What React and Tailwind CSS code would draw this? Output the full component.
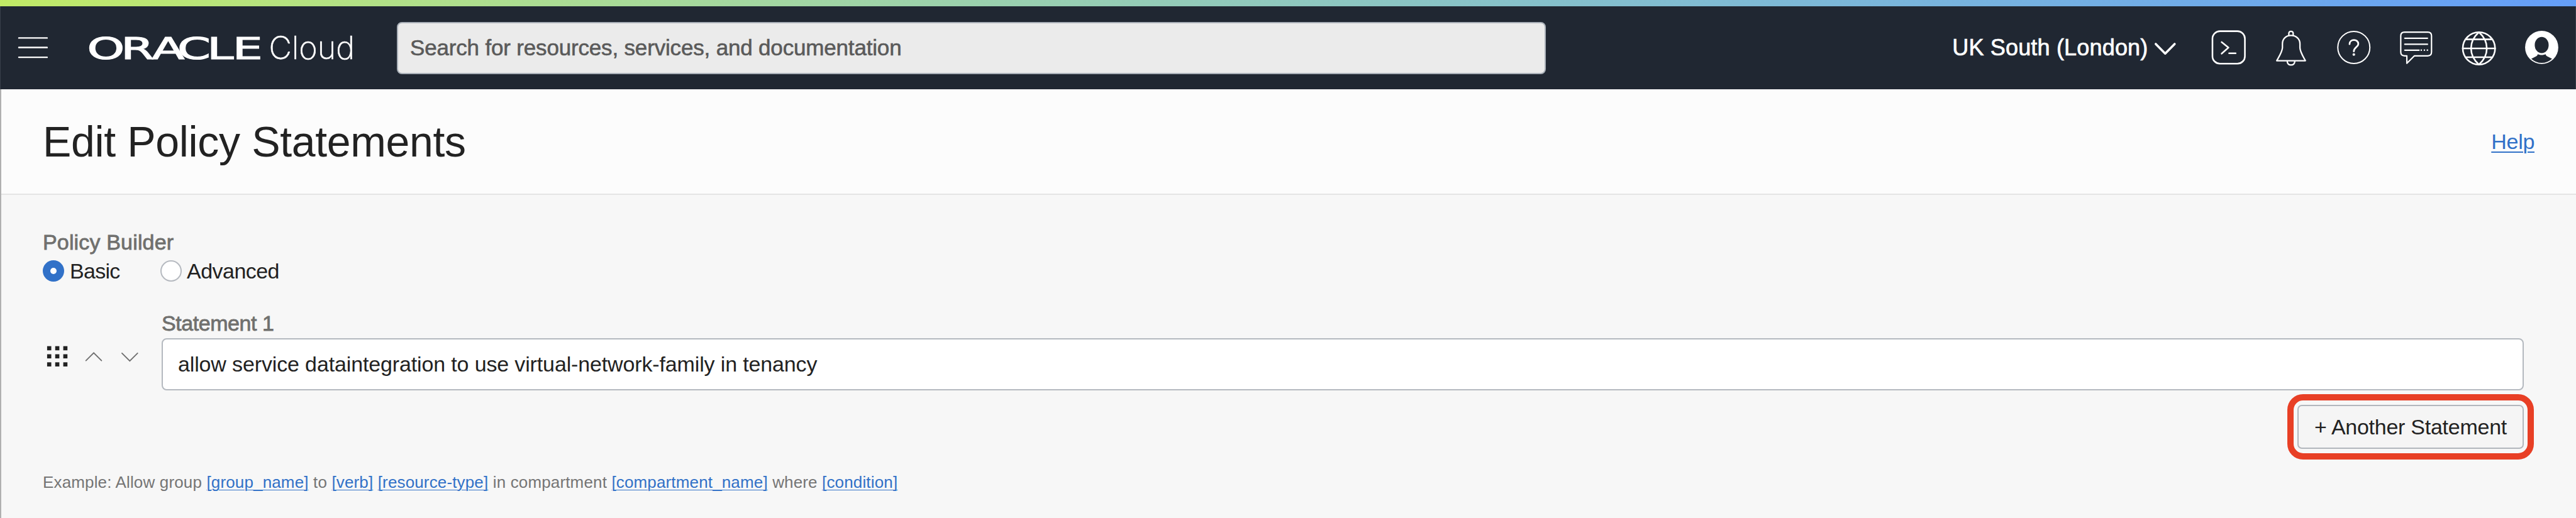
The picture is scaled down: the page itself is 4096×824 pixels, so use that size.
import React from "react";

function MenuIcon() {
  return (
    <svg viewBox="27 55 50 44" className="h-[43.5px] w-[49.4px]" stroke="#fff" strokeWidth="2.4" strokeLinecap="round">
      <path d="M30 61.5H75.5M30 76.8H75.5M30 92.5H75.5" />
    </svg>
  );
}

function Logo() {
  return (
    <svg viewBox="140 41 440 72" className="ml-[62.3px] h-[71.2px] w-[434.9px]" fill="#fff">
      <text
        transform="scale(1.6 1)"
        x="87.8 121.8 153 178.6 208.4 234"
        y="95.2"
        fontFamily="DejaVu Sans, sans-serif"
        fontSize="48"
        stroke="#fff"
        strokeWidth="1.2"
      >
        ORACLE
      </text>
      <text x="433" y="95.4" fontFamily="Inter, sans-serif" fontSize="50.8" fontWeight="200" stroke="#fff" strokeWidth="0.6">
        Cloud
      </text>
    </svg>
  );
}

function Icon({ viewBox, children }) {
  return (
    <svg viewBox={viewBox} className="h-[59.3px] w-[59.3px] shrink-0" fill="none" stroke="#fff" strokeWidth="2.6" strokeLinecap="round" strokeLinejoin="round">
      {children}
    </svg>
  );
}

function HeaderIcons() {
  return (
    <div className="ml-[53px] flex items-center gap-[40.4px]">
      <Icon viewBox="3554.7 47 60 60">
        <rect x="3558.7" y="50.7" width="52.2" height="52.2" rx="12" />
        <path d="M3573.5 68.2L3584.5 77L3573.5 86.8M3585.5 86.3H3596" />
      </Icon>
      <Icon viewBox="3655.6 47 60 60">
        <path d="M3662.8 98.2H3709C3704 89 3700.5 84 3700.2 77.5V71C3700.2 63 3694 57.6 3685.8 57.6C3677.6 57.6 3672 63 3672 71V77.5C3671.5 84 3668 89 3662.8 98.2Z" strokeWidth="2.3" />
        <path d="M3682.3 57.4V54.3C3682.3 49.7 3689.3 49.7 3689.3 54.3V57.4M3679.8 99V100C3680.8 106.8 3690.8 106.8 3691.8 100V99" strokeWidth="2.3" />
      </Icon>
      <Icon viewBox="3756.7 47 60 60">
        <circle cx="3786.8" cy="76.8" r="25.8" strokeWidth="2" />
        <path d="M3779.9 71.5C3779.9 62.6 3794 62.6 3794 71.3C3794 76 3786.8 76.5 3786.8 83.3" strokeWidth="2.8" />
        <circle cx="3786.8" cy="88.2" r="2.1" fill="#fff" stroke="none" />
      </Icon>
      <Icon viewBox="3857.6 47 60 60">
        <path d="M3868 52.2H3905.5Q3911.5 52.2 3911.5 58.2V84.3Q3911.5 90.3 3905.5 90.3H3884L3871.8 102.3V90.3H3868Q3862 90.3 3862 84.3V58.2Q3862 52.2 3868 52.2Z" strokeWidth="2.2" />
        <path d="M3868.5 62H3905M3868.5 71.7H3905M3868.5 81.2H3891.5" strokeWidth="2.2" />
        <path d="M3895 81.2H3895.1M3900 81.2H3900.1M3904.8 81.2H3904.9" strokeWidth="2.4" />
      </Icon>
      <Icon viewBox="3957.7 47 60 60">
        <circle cx="3987.7" cy="78.3" r="26" />
        <path d="M3987.7 52.3C3970.8 67 3970.8 89.6 3987.7 104.3C4004.6 89.6 4004.6 67 3987.7 52.3ZM3967.5 63.8H4007.9M3961.7 78.3H4013.7M3967.5 92.6H4007.9" />
      </Icon>
      <Icon viewBox="4059 47 60 60">
        <circle cx="4088.8" cy="76.8" r="26.7" fill="#fff" stroke="none" />
        <ellipse cx="4088.8" cy="73" rx="11.2" ry="13" fill="#202732" stroke="none" />
        <path d="M4082.500 87.500C4085 89.500 4092.600 89.500 4095 87.500Q4095.500 90.500 4099 91.800L4105.500 95Q4098.500 101.700 4088.800 101.700Q4079.100 101.700 4072.100 95L4078.500 91.800Q4082 90.500 4082.500 87.500Z" fill="#202732" stroke="none" />
      </Icon>
    </div>
  );
}

function Header() {
  return (
    <header className="flex h-[132px] items-center border-x border-[#39404a] bg-[#202732] pr-[23.7px] pl-[25.7px]">
      <MenuIcon />
      <Logo />
      <div className="ml-[57.3px] flex h-[83px] w-[1827px] items-center rounded-[8px] border-2 border-[#aab1b9] bg-[#ebebeb] pl-[19.4px] text-[35px] leading-[40px] tracking-[-0.17px] text-[#5a5a5a] [-webkit-text-stroke:0.6px_#5a5a5a]">
        Search for resources, services, and documentation
      </div>
      <div className="ml-auto flex items-center">
        <span className="text-[36px] leading-[40px] tracking-[0.18px] whitespace-nowrap text-white [-webkit-text-stroke:0.7px_#fff]">
          UK South (London)
        </span>
        <svg viewBox="3466 64 36 26" className="ml-[9.5px] h-[25.7px] w-[35.6px]" fill="none" stroke="#fff" strokeWidth="3.6" strokeLinecap="round" strokeLinejoin="round">
          <path d="M3468.800 71L3484 86.500L3499.200 71" />
        </svg>
        <HeaderIcons />
      </div>
    </header>
  );
}

function Radio({ checked }) {
  return checked ? (
    <span className="flex size-[34px] shrink-0 items-center justify-center rounded-full bg-[#3171c8]">
      <span className="size-[10px] rounded-full bg-white" />
    </span>
  ) : (
    <span className="size-[34px] shrink-0 rounded-full border-2 border-[#b6bac0] bg-white" />
  );
}

function RowControls() {
  const cells = [0, 13, 26];
  return (
    <svg viewBox="69 551.500 160 44" className="mt-[51px] h-[43.5px] w-[158.1px]">
      {cells.map((y) =>
        cells.map((x) => <rect key={`${x}-${y}`} x={76 + x} y={557.2 + y} width="6.700" height="6.700" fill="#222" />)
      )}
      <path d="M138.500 580.500L151 568L163.500 580.500M196.500 568.500L209 581L221.500 568.500" fill="none" stroke="#6f6f6f" strokeWidth="1.900" strokeLinecap="round" />
    </svg>
  );
}

function Link({ children }) {
  return <a className="text-[#3171c8] underline decoration-1 underline-offset-[3px]">{children}</a>;
}

export default function App() {
  return (
    <div className="flex h-[824px] w-[4096px] flex-col overflow-hidden bg-[#f7f7f7] font-['Liberation_Sans',Arial,sans-serif] text-[34px] leading-[40px] text-[#222]">
      <div className="h-[10px] shrink-0 bg-linear-to-r from-[#c1ea66] to-[#659ef8]" />
      <Header />
      <main className="flex grow flex-col border-l-2 border-[#b0b0b0]">
        <section className="flex h-[168px] items-center justify-between border-b-2 border-[#e5e5e5] bg-[#fcfcfc] pr-[66px] pl-[66px]">
          <h1 className="text-[68px] leading-[80px] tracking-[-0.35px]">Edit Policy Statements</h1>
          <a className="tracking-[-0.3px] text-[#3171c8] underline decoration-2 underline-offset-[4px]">Help</a>
        </section>

        <section className="flex flex-col pt-[55px] pr-[83px] pl-[66px]">
          <div className="tracking-[0.16px] text-[#70706e] [-webkit-text-stroke:0.8px_#70706e]">Policy Builder</div>
          <div className="mt-[9px] flex h-[34px] items-center">
            <label className="flex w-[187px] items-center gap-[9px] tracking-[-0.7px]">
              <Radio checked />
              Basic
            </label>
            <label className="flex items-center gap-[8px] tracking-[-0.53px]">
              <Radio />
              Advanced
            </label>
          </div>

          <div className="mt-[46px] flex items-start">
            <div className="w-[189px] shrink-0">
              <RowControls />
            </div>
            <div className="flex grow flex-col">
              <div className="tracking-[-0.45px] text-[#70706e] [-webkit-text-stroke:0.8px_#70706e]">Statement 1</div>
              <div className="mt-[4px] flex h-[83px] items-center rounded-[8px] border-2 border-[#b4b9bf] bg-white pb-[1px] pl-[24px] tracking-[-0.14px]">
                allow service dataintegration to use virtual-network-family in tenancy
              </div>
              <div className="relative mt-[22.5px] w-[360px] self-end">
                <button className="flex h-[70px] w-full items-center justify-center rounded-[7px] border-2 border-[#b2b6bc] bg-[#f5f5f5] tracking-[-0.26px]">
                  + Another Statement
                </button>
                <div className="absolute -inset-x-[16px] -inset-y-[17px] rounded-[25px] border-[10px] border-[#e83f25]" />
              </div>
            </div>
          </div>

          <p className="mt-[38.5px] text-[26px] leading-[30px] tracking-[0.15px] whitespace-nowrap text-[#757575]">
            Example: Allow group <Link>[group_name]</Link> to <Link>[verb]</Link> <Link>[resource-type]</Link> in compartment{" "}
            <Link>[compartment_name]</Link> where <Link>[condition]</Link>
          </p>
        </section>
      </main>
    </div>
  );
}
